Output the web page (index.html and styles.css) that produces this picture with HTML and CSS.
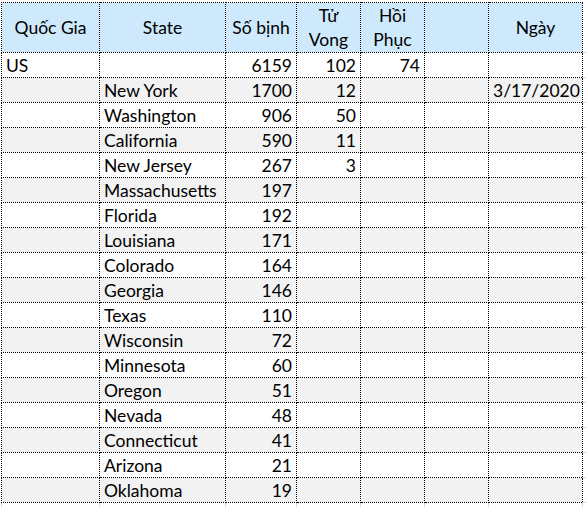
FILE: index.html
```html
<!DOCTYPE html>
<html>
<head>
<meta charset="utf-8">
<link rel="stylesheet" href="styles.css">
</head>
<body>
<table class="sheet">
  <colgroup>
    <col class="c-country"><col class="c-state"><col class="c-cases"><col class="c-deaths"><col class="c-recovered"><col class="c-blank"><col class="c-date"><col class="c-edge">
  </colgroup>
  <thead>
    <tr class="head">
      <th>Quốc Gia</th><th>State</th><th>Số bịnh</th><th>Tử<br>Vong</th><th>Hồi<br>Phục</th><th></th><th>Ngày</th><td class="edge"></td>
    </tr>
  </thead>
  <tbody>
    <tr><td>US</td><td></td><td class="num">6159</td><td class="num">102</td><td class="num">74</td><td></td><td></td><td class="edge"></td></tr>
    <tr class="alt"><td></td><td>New York</td><td class="num">1700</td><td class="num">12</td><td></td><td></td><td class="num">3/17/2020</td><td class="edge"></td></tr>
    <tr><td></td><td>Washington</td><td class="num">906</td><td class="num">50</td><td></td><td></td><td></td><td class="edge"></td></tr>
    <tr class="alt"><td></td><td>California</td><td class="num">590</td><td class="num">11</td><td></td><td></td><td></td><td class="edge"></td></tr>
    <tr><td></td><td>New Jersey</td><td class="num">267</td><td class="num">3</td><td></td><td></td><td></td><td class="edge"></td></tr>
    <tr class="alt"><td></td><td>Massachusetts</td><td class="num">197</td><td></td><td></td><td></td><td></td><td class="edge"></td></tr>
    <tr><td></td><td>Florida</td><td class="num">192</td><td></td><td></td><td></td><td></td><td class="edge"></td></tr>
    <tr class="alt"><td></td><td>Louisiana</td><td class="num">171</td><td></td><td></td><td></td><td></td><td class="edge"></td></tr>
    <tr><td></td><td>Colorado</td><td class="num">164</td><td></td><td></td><td></td><td></td><td class="edge"></td></tr>
    <tr class="alt"><td></td><td>Georgia</td><td class="num">146</td><td></td><td></td><td></td><td></td><td class="edge"></td></tr>
    <tr><td></td><td>Texas</td><td class="num">110</td><td></td><td></td><td></td><td></td><td class="edge"></td></tr>
    <tr class="alt"><td></td><td>Wisconsin</td><td class="num">72</td><td></td><td></td><td></td><td></td><td class="edge"></td></tr>
    <tr><td></td><td>Minnesota</td><td class="num">60</td><td></td><td></td><td></td><td></td><td class="edge"></td></tr>
    <tr class="alt"><td></td><td>Oregon</td><td class="num">51</td><td></td><td></td><td></td><td></td><td class="edge"></td></tr>
    <tr><td></td><td>Nevada</td><td class="num">48</td><td></td><td></td><td></td><td></td><td class="edge"></td></tr>
    <tr class="alt"><td></td><td>Connecticut</td><td class="num">41</td><td></td><td></td><td></td><td></td><td class="edge"></td></tr>
    <tr><td></td><td>Arizona</td><td class="num">21</td><td></td><td></td><td></td><td></td><td class="edge"></td></tr>
    <tr class="alt"><td></td><td>Oklahoma</td><td class="num">19</td><td></td><td></td><td></td><td></td><td class="edge"></td></tr>
    <tr class="next"><td></td><td></td><td></td><td></td><td></td><td></td><td></td><td class="edge"></td></tr>
  </tbody>
</table>
</body>
</html>
```
FILE: styles.css
```css
html, body {
  margin: 0;
  padding: 0;
  background: #ffffff;
  overflow: hidden;
}
body {
  padding: 2px 0 0 1px;
  font-family: Lato, "Open Sans", sans-serif;
  font-size: 17.5px;
  color: #000000;
}
.sheet {
  border-collapse: collapse;
  table-layout: fixed;
  width: 585px;
}
.c-country { width: 98px; }
.c-state { width: 126px; }
.c-cases { width: 71px; }
.c-deaths { width: 64px; }
.c-recovered { width: 64px; }
.c-blank { width: 64px; }
.c-date { width: 94px; }
.c-edge { width: 4px; }

.sheet th,
.sheet td {
  border: 1px dotted #000000;
  padding: 0 4px 0 4px;
  white-space: nowrap;
  overflow: hidden;
  vertical-align: bottom;
  text-align: left;
  font-weight: normal;
  line-height: 23px;
}
.head th {
  height: 49px;
  background: #cde9fb;
  text-align: center;
  vertical-align: middle;
  line-height: 24px;
}
.sheet tbody tr {
  height: 25px;
}
.sheet tr.alt td {
  background: #f2f2f2;
}
.sheet td.num {
  text-align: right;
}
.sheet td.edge,
.sheet tr.alt td.edge,
.head td.edge {
  border-top: none;
  border-left: none;
  border-right: none;
  border-bottom: 1px solid #d4d4d4;
  background: #ffffff;
  padding: 0;
}
.sheet tr.next {
  height: 10px;
}
.sheet tr.next td {
  border-bottom: none;
  border-left-color: #c8c8c8;
  border-right-color: #c8c8c8;
}
.sheet tr.next td.edge {
  border-bottom: none;
}
```
